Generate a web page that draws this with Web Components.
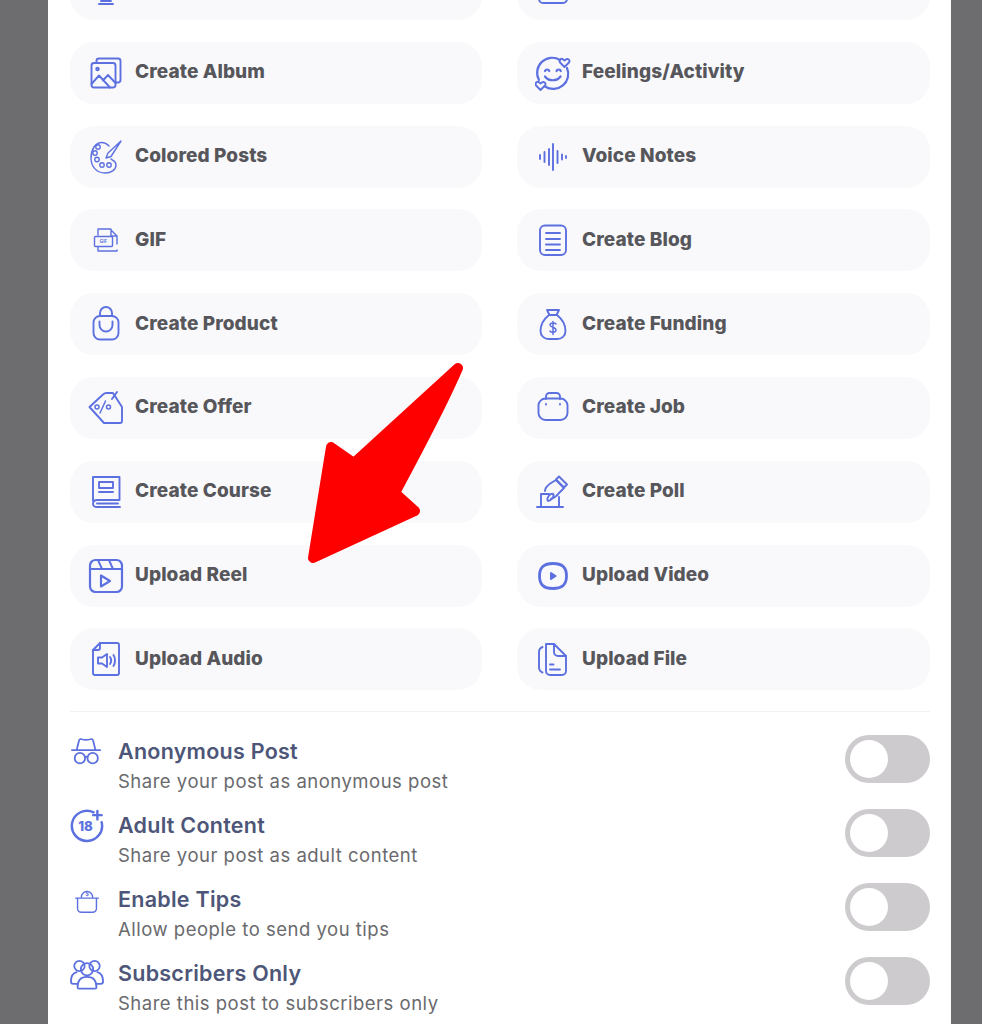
<!DOCTYPE html>
<html lang="en">
<head>
<meta charset="utf-8">
<title>Create post</title>
<style>
  html, body { margin: 0; height: 1024px; overflow: hidden; background: #6d6d70; }
  body { font-family: Inter, "Liberation Sans", sans-serif; }
</style>
</head>
<body>
<post-sheet>
  <option-grid>
    <post-option icon="top-a"></post-option>
    <post-option icon="top-b"></post-option>
    <post-option icon="album">Create Album</post-option>
    <post-option icon="feelings">Feelings/Activity</post-option>
    <post-option icon="palette">Colored Posts</post-option>
    <post-option icon="voice">Voice Notes</post-option>
    <post-option icon="gif">GIF</post-option>
    <post-option icon="blog">Create Blog</post-option>
    <post-option icon="product">Create Product</post-option>
    <post-option icon="funding">Create Funding</post-option>
    <post-option icon="offer">Create Offer</post-option>
    <post-option icon="job">Create Job</post-option>
    <post-option icon="course">Create Course</post-option>
    <post-option icon="poll">Create Poll</post-option>
    <post-option icon="reel">Upload Reel</post-option>
    <post-option icon="video">Upload Video</post-option>
    <post-option icon="audio">Upload Audio</post-option>
    <post-option icon="file">Upload File</post-option>
  </option-grid>
  <setting-row icon="anon" label="Anonymous Post">Share your post as anonymous post</setting-row>
  <setting-row icon="adult" label="Adult Content">Share your post as adult content</setting-row>
  <setting-row icon="tips" label="Enable Tips">Allow people to send you tips</setting-row>
  <setting-row icon="subs" label="Subscribers Only">Share this post to subscribers only</setting-row>
  <red-arrow></red-arrow>
</post-sheet>

<script>
// ─── Icons, all drawn on a 36 box ───────────────────────────────────────
const ICONS = {
    'top-a': '<path d="M15 25v5M21 25v5M11 33h14M13 30h10"/>',
    'top-b': '<rect x="4" y="16" width="28" height="16" rx="4"/>',
    album: '<rect x="3.500" y="8" width="24" height="24.500" rx="2.500"/><path d="M8.500 8V6a2.500 2.500 0 0 1 2.500-2.500h19A2.500 2.500 0 0 1 32.500 6v19a2.500 2.500 0 0 1-2.500 2.500h-2.500"/><circle cx="9.500" cy="14" r="1.300"/><path d="M3.500 29l7.500-8.500 11 12M15 25.500l5-5.500 7.500 8"/>',
    feelings: '<path d="M25 5A15 15 0 0 0 4 25M10 31.500A15 15 0 0 0 32 13" stroke-width="2.200"/><path d="M10 16c.8-2 3.500-2 4.300 0M21.500 16c.8-2 3.500-2 4.300 0M10 21.500c3.500 5 12 5 15.500 0" stroke-width="2.200"/><path d="M29.500 12l-4.500-4.500c-1.500-2.200 1.200-4.800 3.200-3L29.500 5.500l1.300-1c2.200-1.700 4.700 1 3.200 3zM5.500 35L1 30.500c-1.500-2.200 1.200-4.800 3.200-3l1.300 1 1.300-1c2.200-1.700 4.700 1 3.200 3z"/>',
    palette: '<path d="M14 3.500C7 3.500 3 11 3 19c0 9 6 15 14 15 6 0 11-3 11-8 0-4-3-4-5-6M14 3.500c3 0 5 1.500 7 3.500" stroke-width="1.400"/><circle cx="10" cy="8" r="2.200" stroke-width="1.400"/><circle cx="7" cy="14" r="2.200" stroke-width="1.400"/><circle cx="9" cy="20.500" r="2.200" stroke-width="1.400"/><circle cx="14" cy="26" r="2.200" stroke-width="1.400"/><circle cx="21" cy="26" r="2.200" stroke-width="1.400"/><path d="M33 2L20 14l-2 5 5-1.500z" stroke-width="1.400"/>',
    voice: '<path d="M5 16v4M9.500 13v10M14 10v16M18 5v26M22.500 12v12M27 15.500v5M31 17v2"/>',
    gif: '<path d="M10 13V7h12l7 7v8M23 7v7h6M10 25v4h19v-1" stroke-width="1.400"/><rect x="6.500" y="14.500" width="18" height="10" rx="1" stroke-width="1.400"/><text x="15.500" y="21.300" font-size="4.500" font-family="Inter,sans-serif" font-weight="700" stroke="none" fill="currentColor" text-anchor="middle">GIF</text>',
    blog: '<rect x="5" y="3.500" width="26" height="29.500" rx="5"/><path d="M11 11h14M11 17h14M11 22.500h14M11 28h14"/>',
    product: '<rect x="5.500" y="10" width="25" height="23.500" rx="6.500"/><path d="M12 10V7a6 6 0 0 1 12 0v3M11.500 15.500v3.500a6.500 6.500 0 0 0 13 0v-3.500"/>',
    funding: '<path d="M12 4h12l-2.500 5h-7zM14 9h8M14 9C9 13 5.500 19 5.500 25c0 5 4 8 8 8h9c4 0 8-3 8-8 0-6-3.500-12-8.500-16"/><path d="M21 18c-1-1.500-6-1.500-6 1s6 2 6 5-5 2.500-6 1M18 15.500v13" stroke-width="1.500"/>',
    offer: '<path d="M1.500 17L15 4.500c1-1 2-1.500 3.500-1.500H25l9 14v14a2 2 0 0 1-2 2H16z"/><path d="M24 9l5-7"/><path d="M12 23l5.500-12" stroke-width="1.500"/><circle cx="9" cy="17" r="2" stroke-width="1.500"/><circle cx="20.500" cy="17" r="2" stroke-width="1.500"/>',
    job: '<rect x="3.500" y="8.500" width="29" height="21.500" rx="7"/><path d="M11 9V6.500A3.500 3.500 0 0 1 14.500 3h7A3.500 3.500 0 0 1 25 6.500V9"/><path d="M11 14v.5M25 14v.5"/>',
    course: '<path d="M5 27V3h26.500v23H9a4 4 0 0 0-4 3.500c0 2.500 2 3.500 4 3.500h23"/><rect x="11" y="8" width="14" height="6"/><path d="M11 18h14M9 29.500h21"/>',
    poll: '<path d="M2 33h26M6 33V20h8M24 33V23"/><path d="M10 17c0-3 3-6 6-8l5-3 8 8-5 5c-2 3-5 5-8 6"/><path d="M13 27c-2-3 2-8 5-7 2 2-2 7-5 7zM24 2.500l8 8-3 3-8-8z"/>',
    reel: '<rect x="2" y="2" width="32" height="32" rx="5.500" stroke-width="2.200"/><path d="M2 11h32M10 2l4 9M21 2l4 9"/><path d="M13 17.500v11l9-5.500z" stroke-width="2.200"/>',
    video: '<path d="M18 5.500c-9 0-13.500 3.500-13.500 12.500s4.500 12.500 13.500 12.500 13.500-3.500 13.500-12.500S27 5.500 18 5.500z" stroke-width="2.800"/><path d="M16 15v6l4.500-3z" stroke-width="2" fill="currentColor"/>',
    audio: '<path d="M12 2h17a2 2 0 0 1 2 2v28a2 2 0 0 1-2 2H7a2 2 0 0 1-2-2V9z"/><path d="M12 2v5a2 2 0 0 1-2 2H5"/><path d="M10 16.500h4l5-3.500v13l-5-3.500h-4z"/><path d="M22 16c1.300 2 1.300 5 0 7M25.500 14c2 3 2 8 0 11"/>',
    file: '<path d="M11 3h8l12 12v15a4 4 0 0 1-4 4H15a4 4 0 0 1-4-4z"/><path d="M19 3v8a4 4 0 0 0 4 4h8"/><path d="M7.500 6C5 7 4 8.500 4 11v15c0 3 1 4.500 3.500 5.500"/><path d="M15 23.500h3.500M15 28.500h10"/>',
    anon: '<path d="M2 16h30M7 16l2.500-10c.3-1.500 1.500-2 3-1.500 3 .8 6 .8 9 0 1.500-.5 2.700 0 3 1.500L27 16"/><circle cx="10.500" cy="24.500" r="5.500"/><circle cx="24" cy="24.500" r="5.500"/><path d="M16 23.500c1-1 1.500-1 2.500 0"/>',
    adult: '<path d="M25 3.500A16 16 0 1 0 33.500 14" stroke-width="2.600"/><path d="M29 2v9M24.500 6.500h9" stroke-width="2.600"/><text x="16.500" y="23.800" font-size="14" font-family="Inter,sans-serif" font-weight="800" stroke="none" fill="currentColor" text-anchor="middle">18</text>',
    tips: '<path d="M8 16h20v11a4 4 0 0 1-4 4H12a4 4 0 0 1-4-4zM6 16h24" stroke-width="1.500"/><path d="M12 15a6 6 0 1 1 12 0" stroke-width="1.500"/><text x="18" y="14.200" font-size="6" font-family="Inter,sans-serif" font-weight="600" stroke="none" fill="currentColor" text-anchor="middle">$</text>',
    subs: '<circle cx="10" cy="9.500" r="5.500"/><circle cx="26" cy="9.500" r="5.500"/><circle cx="18" cy="13" r="6.500"/><path d="M7 16C3 17 1 21 1 26c0 1.500 1 2.500 2.500 2.500H8M29 16c4 1 6 5 6 10 0 1.500-1 2.500-2.500 2.500H28"/><path d="M8 32c0-8 4-11 10-11s10 3 10 11c0 1-.7 1.500-1.500 1.500h-17C8.700 33.500 8 33 8 32z"/>'
};

function iconSvg(name, size) {
    return `<svg viewBox="0 0 36 36" width="${size}" height="${size}" fill="none" stroke="currentColor" stroke-width="1.900" stroke-linecap="round" stroke-linejoin="round" aria-hidden="true">${ICONS[name] || ''}</svg>`;
}

// ─── Elements ───────────────────────────────────────────────────────────
class PostSheet extends HTMLElement {
    constructor() {
        super();
        this.attachShadow({ mode: 'open' }).innerHTML = `<style>
            :host { display: flow-root; position: relative; box-sizing: border-box; width: 903px; height: 1024px; margin-left: 48px; padding: 0 21px 0 22px; background: #fff; }
        </style><slot></slot>`;
    }
}

class OptionGrid extends HTMLElement {
    constructor() {
        super();
        this.attachShadow({ mode: 'open' }).innerHTML = `<style>
            :host { display: grid; grid-template-columns: 412px 413px; column-gap: 35px; row-gap: 21.8px; margin-top: -42px; padding-bottom: 21px; border-bottom: 1px solid #f3f3f5; margin-bottom: 10px; }
        </style><slot></slot>`;
    }
}

class PostOption extends HTMLElement {
    constructor() {
        super();
        this.attachShadow({ mode: 'open' });
    }
    connectedCallback() {
        this.shadowRoot.innerHTML = `<style>
            :host { display: flex; align-items: center; gap: 11px; height: 62px; padding-left: 18px; border-radius: 24px; background: #f9f9fb; color: #56565b; font: 800 19px/1 Inter, "Liberation Sans", sans-serif; letter-spacing: .1px; }
            svg { flex: none; color: #5d70e0; }
            span { padding-bottom: 2px; }
        </style>${iconSvg(this.getAttribute('icon'), 36)}<span><slot></slot></span>`;
    }
}

class SettingRow extends HTMLElement {
    constructor() {
        super();
        this.attachShadow({ mode: 'open' });
    }
    connectedCallback() {
        this.shadowRoot.innerHTML = `<style>
            :host { display: grid; grid-template-columns: 48px 1fr auto; align-items: center; height: 74px; }
            .icon { display: flex; color: #5d70e0; padding-bottom: 14px; }
            .text { padding-top: 14px; }
            b { display: block; font: 600 21.5px/28px Inter, "Liberation Sans", sans-serif; letter-spacing: .25px; color: #4d5678; }
            span { display: block; font: 400 18.5px/28px Inter, "Liberation Sans", sans-serif; letter-spacing: .5px; color: #6a6a6e; margin-top: 2px; }
        </style>
        <div class="icon">${iconSvg(this.getAttribute('icon'), 34)}</div>
        <div class="text"><b>${this.getAttribute('label')}</b><span><slot></slot></span></div>
        <toggle-switch></toggle-switch>`;
    }
}

class ToggleSwitch extends HTMLElement {
    constructor() {
        super();
        this.attachShadow({ mode: 'open' }).innerHTML = `<style>
            :host { display: flex; align-items: center; box-sizing: border-box; width: 85px; height: 48px; padding-left: 5px; border-radius: 24px; background: #cdcbce; }
            i { display: block; width: 38px; height: 38px; border-radius: 50%; background: #fff; }
        </style><i></i>`;
    }
}

class RedArrow extends HTMLElement {
    constructor() {
        super();
        this.attachShadow({ mode: 'open' }).innerHTML = `<style>
            :host { position: absolute; left: 242px; top: 350px; width: 200px; height: 230px; }
            svg { display: block; }
        </style>
        <svg viewBox="0 0 200 230" width="200" height="230">
            <path d="M168 18 C150 60 125 105 105 143 L125 161 L23 208 L41 97 L64 113 Z" fill="#fe0000" stroke="#fe0000" stroke-width="10" stroke-linejoin="round"/>
        </svg>`;
    }
}

customElements.define('post-sheet', PostSheet);
customElements.define('option-grid', OptionGrid);
customElements.define('post-option', PostOption);
customElements.define('setting-row', SettingRow);
customElements.define('toggle-switch', ToggleSwitch);
customElements.define('red-arrow', RedArrow);
</script>
</body>
</html>
